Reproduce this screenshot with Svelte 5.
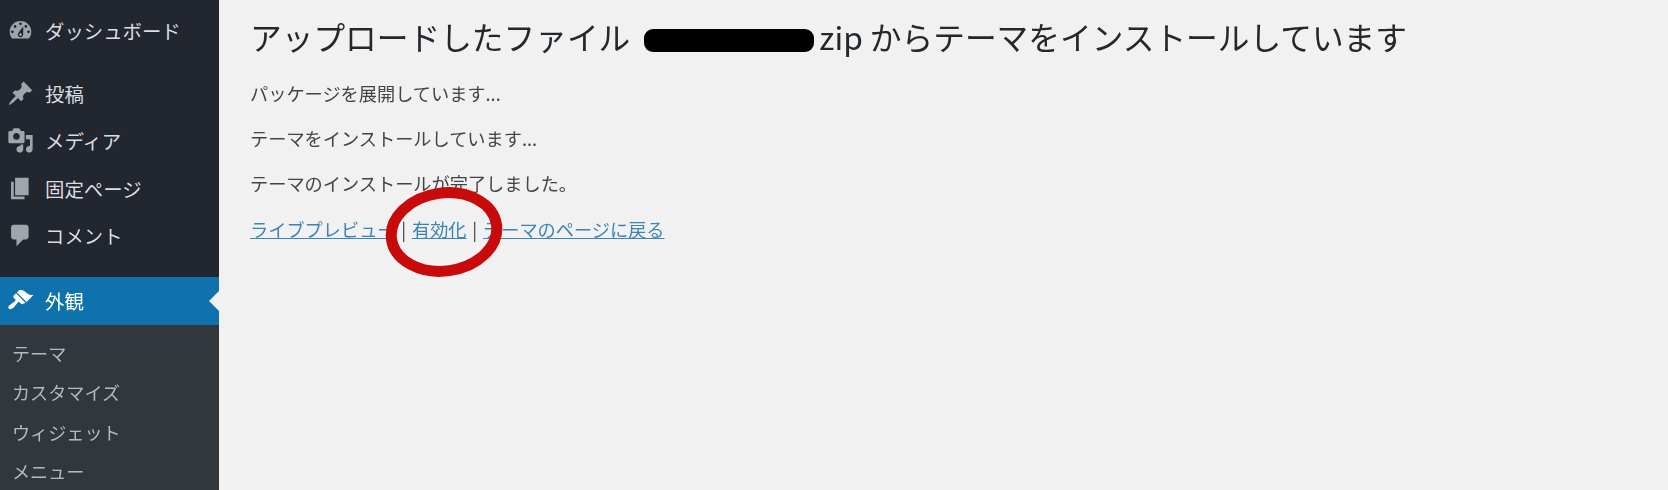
<script>
  const icons = {
    dashboard: 'M3.76 16h12.48c1.1-1.37 1.76-3.11 1.76-5 0-4.42-3.58-8-8-8s-8 3.58-8 8c0 1.89.66 3.63 1.76 5zM10 4c.55 0 1 .45 1 1s-.45 1-1 1-1-.45-1-1 .45-1 1-1zM6 6c.55 0 1 .45 1 1s-.45 1-1 1-1-.45-1-1 .45-1 1-1zm8 0c.55 0 1 .45 1 1s-.45 1-1 1-1-.45-1-1 .45-1 1-1zm-5.37 5.55L12 7v6c0 1.1-.9 2-2 2s-2-.9-2-2c0-.57.24-1.08.63-1.45zM4 10c.55 0 1 .45 1 1s-.45 1-1 1-1-.45-1-1 .45-1 1-1zm12 0c.55 0 1 .45 1 1s-.45 1-1 1-1-.45-1-1 .45-1 1-1zm-5 3c0-.55-.45-1-1-1s-1 .45-1 1 .45 1 1 1 1-.45 1-1z',
    post: 'M10.44 3.02l1.82-1.82 6.36 6.35-1.83 1.82c-1.05-.68-2.48-.57-3.41.36l-.75.75c-.92.93-1.04 2.35-.35 3.41l-1.83 1.82-2.41-2.41-2.8 2.79c-.42.42-3.38 2.71-3.8 2.29s1.86-3.39 2.28-3.81l2.79-2.79L4.1 9.36l1.83-1.82c1.05.69 2.48.57 3.4-.36l.75-.75c.93-.92 1.05-2.35.36-3.41z',
    media: 'M13 11V4c0-.55-.45-1-1-1h-1.67L9 1H5L3.67 3H2c-.55 0-1 .45-1 1v7c0 .55.45 1 1 1h10c.55 0 1-.45 1-1zM7 4.5c1.38 0 2.5 1.12 2.5 2.5S8.38 9.5 7 9.5 4.5 8.38 4.5 7 5.62 4.5 7 4.5zM14 6h5v10.5c0 1.38-1.12 2.5-2.5 2.5S14 17.88 14 16.5s1.12-2.5 2.5-2.5c.17 0 .34.02.5.05V9h-3V6zm-4 8.05V13h2v3.5c0 1.38-1.12 2.5-2.5 2.5S7 17.88 7 16.5 8.12 14 9.5 14c.17 0 .34.02.5.05z',
    page: 'M6 15V2h10v13H6zm-1 1h8v2H3V5h2v11z',
    comment: 'M5 2h9c1.1 0 2 .9 2 2v7c0 1.1-.9 2-2 2h-2l-5 5v-5H5c-1.1 0-2-.9-2-2V4c0-1.1.9-2 2-2z',
    brush: 'M14.48 11.06L7.41 3.99l1.5-1.5c.5-.56 2.3-.47 3.51.32 1.21.8 1.43 1.28 2.91 2.1 1.18.64 2.45 1.26 4.45.85zm-.71.71L6.7 4.7 4.93 6.47c-.39.39-.39 1.02 0 1.41l1.06 1.06c.39.39.39 1.03 0 1.42-.6.6-1.43 1.11-2.21 1.69-.35.26-.7.53-1.01.84C1.43 13.23.4 14.98 1.4 16s2.76-.03 4.08-1.37c.31-.31.58-.66.85-1.02.57-.78 1.08-1.61 1.69-2.21.39-.39 1.02-.39 1.41 0l1.06 1.06c.39.39 1.02.39 1.41 0z'
  };

  const menu = [
    { icon: 'post', label: '投稿' },
    { icon: 'media', label: 'メディア' },
    { icon: 'page', label: '固定ページ' },
    { icon: 'comment', label: 'コメント' }
  ];
  const submenu = ['テーマ', 'カスタマイズ', 'ウィジェット', 'メニュー'];
</script>

<div class="page">
  <nav class="sidebar">
    <div class="item first">
      <svg viewBox="0 0 20 20"><path d={icons.dashboard} /></svg>
      <span>ダッシュボード</span>
    </div>
    <div class="group">
      {#each menu as m}
        <div class="item">
          <svg viewBox="0 0 20 20"><path d={icons[m.icon]} /></svg>
          <span>{m.label}</span>
        </div>
      {/each}
    </div>
    <div class="item current">
      <svg viewBox="0 0 20 20"><path d={icons.brush} /></svg>
      <span>外観</span>
    </div>
    <ul class="submenu">
      {#each submenu as s}
        <li>{s}</li>
      {/each}
    </ul>
  </nav>

  <main class="content">
    <h1>アップロードしたファイル <span class="redacted"></span>zip からテーマをインストールしています</h1>
    <p>パッケージを展開しています...</p>
    <p>テーマをインストールしています...</p>
    <p>テーマのインストールが完了しました。</p>
    <p class="actions">
      <a href="#preview">ライブプレビュー</a> | <a href="#activate">有効化</a> | <a href="#themes">テーマのページに戻る</a>
      <svg class="ring" viewBox="0 0 130 100">
        <ellipse cx="65" cy="50" rx="53" ry="39" transform="rotate(-8 65 50)" />
      </svg>
    </p>
  </main>
</div>

<style>
  :global(body) {
    margin: 0;
    background: #f1f1f1;
  }

  .page {
    display: flex;
    height: 490px;
    overflow: hidden;
    font-family: "Noto Sans CJK JP", "Noto Sans", sans-serif;
    filter: blur(0.4px);
  }

  .sidebar {
    width: 219px;
    flex-shrink: 0;
    background: #22262e;
    color: #dcdde0;
    font-size: 19.4px;
  }

  .item {
    display: flex;
    align-items: center;
    gap: 11px;
    height: 47.5px;
    padding-left: 7px;
  }

  .item svg {
    width: 27px;
    height: 27px;
    fill: #a0a5aa;
    flex-shrink: 0;
  }

  .first {
    margin-top: 7px;
  }

  .group {
    margin-top: 15px;
  }

  .current {
    position: relative;
    margin-top: 17px;
    height: 48px;
    background: #0f72ad;
    color: #fff;
  }

  .current svg {
    fill: #fff;
  }

  .current::after {
    content: "";
    position: absolute;
    right: 0;
    top: 14px;
    border: 10px solid transparent;
    border-right-color: #f1f1f1;
    border-left-width: 0;
  }

  .submenu {
    list-style: none;
    margin: 0;
    padding: 9px 0 0 12px;
    height: 200px;
    background: #32373c;
    color: #b4b9be;
    font-size: 18.1px;
  }

  .submenu li {
    height: 39.5px;
    line-height: 39.5px;
  }

  .content {
    flex: 1;
    padding: 13px 0 0 31px;
    color: #444;
    font-size: 18.2px;
  }

  h1 {
    margin: 0 0 21px;
    font-size: 31.7px;
    font-weight: 400;
    line-height: 46px;
    color: #23282d;
  }

  .redacted {
    display: inline-block;
    width: 170px;
    height: 23px;
    margin: 0 5px -2px 7px;
    border-radius: 9px;
    background: #000;
  }

  p {
    margin: 0 0 19.2px;
    line-height: 26px;
  }

  .actions {
    position: relative;
    width: fit-content;
    word-spacing: 1.7px;
  }

  a {
    color: #3b84b5;
  }

  .ring {
    position: absolute;
    left: 129px;
    top: -34px;
    width: 130px;
    height: 100px;
  }

  .ring ellipse {
    fill: none;
    stroke: #c80a0a;
    stroke-width: 11;
  }
</style>
